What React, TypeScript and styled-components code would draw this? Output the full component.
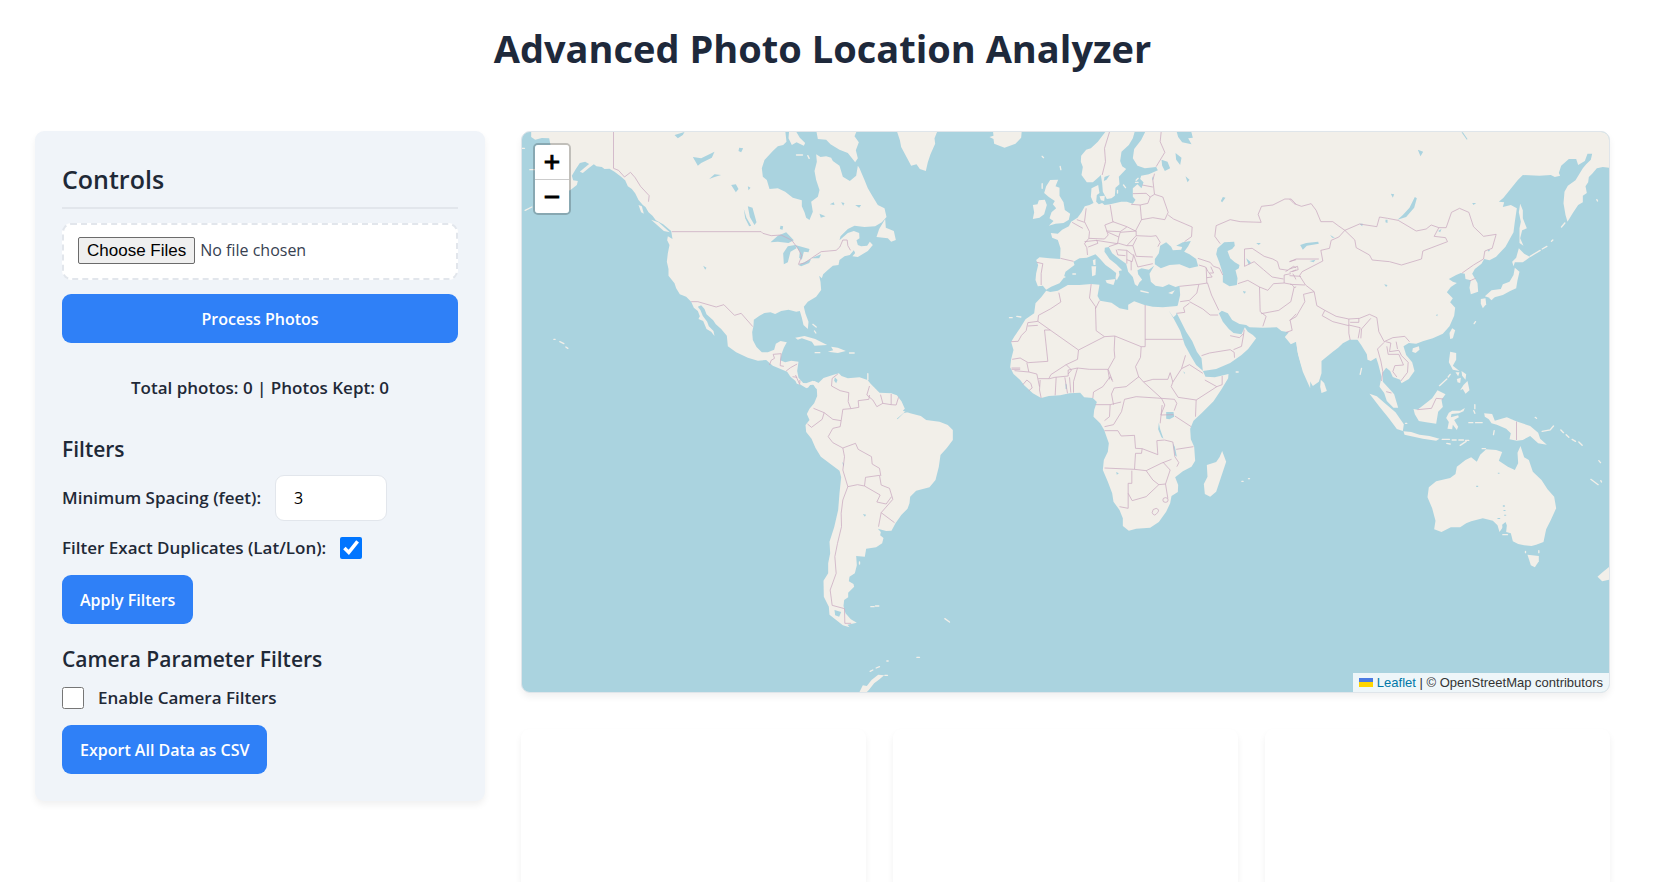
import React from "react";
import styled, { createGlobalStyle } from "styled-components";

const GlobalStyle = createGlobalStyle`
  *, *::before, *::after { box-sizing: border-box; }
  body {
    margin: 0;
    background: #ffffff;
    color: #1f2937;
    font-family: "Open Sans", "Noto Sans", sans-serif;
    font-size: 17px;
    line-height: 24px;
  }
`;

const Page = styled.div`
  min-height: 100vh;
  display: flex;
  flex-direction: column;
  padding: 0 55px 0 35px;
`;

const Title = styled.h1`
  margin: 20px 0 55px;
  text-align: center;
  font-size: 38px;
  line-height: 56px;
  font-weight: 700;
  color: #1e293b;
`;

const Layout = styled.main`
  flex: 1;
  display: grid;
  grid-template-columns: 450px minmax(0, 1fr);
  gap: 36px;
`;

const Panel = styled.aside`
  align-self: start;
  display: flex;
  flex-direction: column;
  align-items: flex-start;
  padding: 27px;
  border-radius: 9px;
  background: #f0f4f9;
  box-shadow: 0 4px 7px rgba(0, 0, 0, 0.06);
`;

const PanelTitle = styled.h2`
  width: 100%;
  margin: 0 0 14px;
  padding: 4px 0 10px;
  border-bottom: 2px solid #e2e6ec;
  font-size: 25px;
  line-height: 35px;
  font-weight: 600;
`;

const SectionTitle = styled.h3`
  margin: 0 0 10px;
  font-size: 21px;
  line-height: 32px;
  font-weight: 600;

  button + & {
    margin-top: 19px;
  }
`;

const FileInput = styled.input`
  width: 100%;
  height: 57px;
  margin-bottom: 14px;
  padding: 12px 14px;
  border: 2px dashed #e2e6ec;
  border-radius: 9px;
  background: #ffffff;
  font: inherit;
  font-size: 16px;
  color: #374151;

  &::file-selector-button {
    height: 27px;
    padding: 0 8px;
    margin-right: 5px;
    border: 1px solid #6b6b6b;
    border-radius: 2px;
    background: #efefef;
    color: #000000;
    font-family: "Liberation Sans", Arial, sans-serif;
    font-size: 17px;
  }
`;

const Button = styled.button<{ $full?: boolean }>`
  width: ${(p) => (p.$full ? "100%" : "auto")};
  height: 49px;
  padding: 0 18px;
  border: 0;
  border-radius: 9px;
  background: #2f80f7;
  color: #ffffff;
  font: inherit;
  font-size: 16px;
  font-weight: 600;
  cursor: pointer;
`;

const Stats = styled.p`
  width: 100%;
  margin: 33px 0;
  text-align: center;
  font-weight: 600;
`;

const Field = styled.div<{ $height: number }>`
  display: flex;
  align-items: center;
  gap: 14px;
  height: ${(p) => p.$height}px;
  margin-bottom: 14px;
  font-weight: 600;
`;

const NumberInput = styled.input`
  width: 112px;
  height: 46px;
  padding: 0 18px;
  border: 1px solid #e2e6ec;
  border-radius: 9px;
  background: #ffffff;
  color: #000000;
  font: inherit;
  font-size: 16px;
  font-weight: 400;
`;

const Checkbox = styled.input`
  width: 22px;
  height: 22px;
  margin: 0;
`;

const Content = styled.section`
  display: flex;
  flex-direction: column;
  gap: 36px;
`;

const MapFrame = styled.div`
  position: relative;
  height: 562px;
  overflow: hidden;
  border: 1px solid #dfe5ea;
  border-radius: 9px;
  background: #aad3df;
  box-shadow: 0 4px 7px rgba(0, 0, 0, 0.06);
`;

const MapDrawing = styled.svg`
  display: block;
  width: 100%;
  height: 100%;
`;

const ZoomControl = styled.div`
  position: absolute;
  top: 11px;
  left: 11px;
  display: flex;
  flex-direction: column;
  border: 2px solid rgba(0, 0, 0, 0.2);
  border-radius: 5px;
  background-clip: padding-box;
  overflow: hidden;
`;

const ZoomButton = styled.button`
  width: 34px;
  height: 34px;
  padding: 0;
  border: 0;
  background: #ffffff;
  color: #000000;
  font: 400 28px/32px "Liberation Sans", Arial, sans-serif;
  -webkit-text-stroke: 1px #000000;

  & + & {
    border-top: 1px solid #cccccc;
  }
`;

const Attribution = styled.div`
  position: absolute;
  right: 0;
  bottom: 0;
  display: flex;
  align-items: center;
  padding: 0 6px;
  background: rgba(255, 255, 255, 0.8);
  color: #333333;
  font: 13px/19px "Liberation Sans", Arial, sans-serif;
  white-space: pre;

  a {
    display: flex;
    align-items: center;
    gap: 4px;
    color: #0078a8;
    text-decoration: none;
  }
`;

const Charts = styled.div`
  flex: 1;
  min-height: 150px;
  display: grid;
  grid-template-columns: repeat(3, minmax(0, 1fr));
  gap: 27px;
`;

const ChartCard = styled.div`
  border-radius: 9px 9px 0 0;
  background: #ffffff;
  box-shadow: 0 4px 7px rgba(0, 0, 0, 0.06);
`;

type Region = {
  x: number;
  y: number;
  land: string[];
  islands?: string;
  lakes?: string;
  borders: string;
};

const regions: Region[] = [
  {
    // North America
    x: 0,
    y: 0,
    land: [
      "M50 15 L50 36 62 44 82 39 104 40 108 60 100 150 150 200 167 196 187 180 190 168 176 166 172 152 184 132 196 114 212 110 224 117 210 128 196 140 205 144 224 128 238 118 246 124 262 126 270 132 285 131 300 140 318 154 332 166 340 184 352 192 362 205 372 225 385 240 393 246 402 262 414 272 424 286 446 298 470 318 474 342 460 334 458 346 465 360 460 385 457 410 462 432 462 452 480 475 485 490 496 508 515 515 530 530 538 548 550 558 556 574 552 582 566 588 576 612 590 620 600 633 597 618 583 604 578 590 565 573 558 556 550 545 560 541 570 552 576 568 596 586 604 598 620 612 637 632 640 664 665 682 700 698 730 707 755 705 775 722 800 733 818 740 828 755 843 768 847 776 860 780 876 790 882 782 895 777 904 790 940 800 940 760 914 775 900 768 884 778 866 774 852 758 848 738 852 710 830 707 812 712 797 706 802 685 808 668 817 652 798 648 784 656 779 674 760 682 742 682 726 666 715 645 713 622 717 602 718 584 735 572 750 564 768 562 782 567 800 558 822 554 845 560 856 558 862 578 867 600 880 612 882 590 873 566 868 545 880 530 905 515 920 495 918 470 914 452 922 460 926 448 940 435 955 422 972 420 975 405 990 394 1006 390 1018 376 1022 384 1014 394 1030 396 1060 378 1075 360 1066 350 1058 362 1040 364 1030 360 1026 346 1035 340 1034 324 1018 318 1000 324 975 346 978 334 1000 312 1020 302 1050 306 1082 304 1102 292 1116 276 1110 250 1090 240 1074 214 1060 190 1050 165 1035 130 1030 122 1025 152 1006 168 985 155 975 122 955 108 950 98 935 94 918 96 905 88 907 110 900 138 905 165 915 195 910 215 890 230 895 260 885 285 875 278 870 262 862 244 862 226 835 218 812 200 790 190 765 192 757 165 745 155 742 130 750 105 775 78 790 64 806 60 816 50 812 15Z",
      "M824 15 L822 40 832 60 846 52 868 62 872 54 856 38 842 15Z",
      "M905 15 L910 42 935 44 948 58 975 74 1000 84 1022 112 1030 100 1024 76 1033 52 1020 34 1028 15Z",
      "M1146 15 L1156 45 1160 66 1174 92 1190 122 1206 118 1216 132 1234 138 1240 112 1248 88 1262 56 1260 40 1270 15Z",
      "M1112 282 L1114 308 1138 318 1144 345 1130 350 1120 340 1086 336 1094 312Z",
      "M842 638 L870 633 902 642 938 660 900 662 892 650 862 640 850 644Z",
      "M950 665 L970 668 994 678 970 684 940 680 956 676Z",
      "M410 284 L432 292 466 322 448 318Z",
      "M372 240 L382 244 388 266 380 262Z",
    ],
    islands:
      "M902 683h14 M1005 684h14 M22 70h8 M46 134h14 M32 256l20-10 M154 666l6 4 M118 643h4 M136 650l12 6 M895 598l10 8 M900 618l4 6 M1060 746v18 M846 90h18 M880 92l4 8",
    lakes:
      "M768 352 L790 332 815 322 838 346 822 354 790 350Z M808 418 L806 385 820 364 842 360 846 370 828 380 820 412Z M842 360 L885 372 882 382 868 380 862 404 854 398 856 380Z M852 420 L890 402 884 414 860 424Z M890 400 L920 388 914 400Z M700 244 L714 248 726 292 720 300 706 276Z M688 252 l8 26 14 24 -6 2 -12 -24Z M535 96 L560 100 600 80 592 98 560 114 550 122Z M480 30 L510 21 505 30 490 40Z M584 162 L600 148 620 150 600 156Z M674 68 l12 2 -6 12 -8 -4Z M650 180 l14 -2 8 14 -8 10Z M700 184 l8 4 -6 8Z M915 266 l18 8 -14 4Z M946 238 l12 -6 2 8Z M980 232 l10 2 -4 8Z M1022 240 l18 0 -6 8Z M798 302 l8 2 -2 10 -8 -2Z M566 422 l10 6 -4 6Z M962 756 l8 8 -6 10Z",
    borders:
      "M297 21 V130 L312 136 330 156 348 142 362 158 378 184 404 212 402 230 M472 320 H740 L745 325 770 332 800 330 832 346 850 370 862 392 852 418 870 414 896 396 920 380 965 376 976 366 985 345 998 345 1000 362 1008 376 M530 530 L550 530 605 546 628 539 660 571 680 565 715 605 M765 720 L770 706 780 700 776 688 800 686 797 722 808 724 M815 738 L828 728 848 717 M834 755 L848 757 M856 765 v15",
  },
  {
    // South America and the Antarctic Peninsula
    x: 795,
    y: 705,
    land: [
      "M60 70 L85 84 92 74 103 74 112 88 113 108 104 130 90 146 82 162 90 180 78 195 80 216 96 236 108 264 124 290 150 310 180 332 185 352 180 400 176 450 164 502 150 545 152 580 146 610 146 640 132 662 133 710 148 740 150 764 170 780 190 796 210 802 204 794 232 788 214 778 198 760 192 738 194 720 206 712 206 698 224 680 222 672 208 664 210 650 226 640 232 616 230 588 256 590 260 566 290 562 308 550 312 534 302 526 304 516 295 506 320 513 336 512 348 490 366 464 384 446 390 430 392 410 410 392 450 382 468 360 478 320 483 285 502 264 520 240 520 210 505 195 480 185 440 180 424 168 392 160 370 152 376 146 366 124 352 106 335 100 300 98 286 84 274 72 264 60 240 52 205 55 186 48 178 40 160 45 132 54 116 70 100 62 80 70Z",
      "M240 996 L250 976 262 978 276 960 296 944 314 946 300 958 284 970 268 990 262 996Z",
    ],
    islands:
      "M274 740h10 M288 738h10 M496 776l14 10 M272 934l8-4 M290 924l10-4 M322 903h4 M316 946h8 M240 606v6 M412 892h8",
    lakes:
      "M166 52 l8 8 -4 10 -6 -8Z M188 306 l6 6 -2 8Z M250 462 l10 2 -4 6Z M165 750 l20 6 -6 14 -12 -4Z M352 176 L380 152 386 156 372 160 354 178Z",
    borders:
      "M175 42 L158 55 156 78 182 92 208 98 206 125 214 146 238 142 236 122 268 118 270 105 M102 145 L134 158 160 178 185 182 190 148 214 146 M134 158 L128 178 96 202 84 192 M185 182 L182 200 160 205 146 230 160 248 190 264 228 250 236 268 276 290 278 312 300 325 304 348 M190 264 L195 290 190 330 205 380 234 374 255 378 M255 378 L258 352 300 346 305 375 330 385 340 418 305 458 297 500 M336 410 L320 432 292 426 302 405 255 378 M305 458 L345 488 M205 380 L190 420 185 460 186 500 174 550 166 590 170 640 152 690 158 736 195 746 196 790 215 790 M270 78 L262 105 280 120 292 140 310 130 303 104 M310 130 L335 134 335 102 M335 134 L350 135 357 112 M48 45 L60 72",
  },
  {
    // Europe, the Middle East and western Asia
    x: 1425,
    y: 0,
    land: [
      "M10 15 L12 32 0 36 12 42 14 56 45 68 78 56 95 38 97 15Z",
      "M352 15 L325 50 304 70 290 74 275 92 274 110 280 126 276 150 292 172 310 172 328 156 334 150 338 175 340 200 352 222 366 220 376 212 378 188 390 178 388 155 410 132 398 124 392 108 396 80 418 60 430 40 437 15Z",
      "M470 15 L455 45 434 72 430 100 444 122 466 130 500 126 505 136 478 148 455 152 452 162 462 172 456 190 444 178 430 190 430 215 438 224 430 236 412 230 395 230 362 238 345 240 338 234 328 238 320 230 322 210 330 204 326 180 306 190 304 215 312 234 300 240 286 244 276 262 264 278 245 290 238 304 218 314 205 326 184 324 188 338 205 345 213 370 212 402 180 400 150 397 140 405 146 420 140 445 138 465 145 484 160 482 170 494 185 485 210 475 222 460 228 440 255 420 252 410 270 400 292 398 318 388 332 402 348 420 365 432 380 444 378 460 382 466 390 450 388 438 398 436 380 418 360 402 345 380 346 368 358 366 368 385 390 402 410 416 416 440 430 456 436 478 444 484 450 472 458 464 446 448 444 436 456 430 478 434 494 422 480 446 484 470 498 482 520 486 538 478 558 486 570 482 572 510 565 540 555 556 562 565 575 590 590 620 608 648 622 680 636 700 640 738 680 732 722 714 756 690 776 672 800 640 790 630 775 620 766 607 756 628 732 624 718 612 700 590 688 565 697 557 715 565 728 585 750 597 770 600 780 607 820 608 862 607 876 618 898 622 886 636 904 658 920 650 926 690 940 740 962 790 L970 15Z",
      "M182 165 L206 164 198 184 210 188 210 212 222 232 226 255 242 266 238 284 222 294 198 296 178 302 192 288 180 280 186 262 200 250 190 238 196 228 178 216 164 204 170 184Z",
      "M148 226 L166 224 172 240 164 268 150 278 130 282 134 262 130 240 144 238Z",
      "M306 424 L320 424 318 450 308 454Z",
      "M310 406 L318 402 318 420 312 420Z",
      "M348 466 L378 462 372 480 352 474Z",
      "M536 504 L556 496 548 508Z",
      "M330 214 L346 212 344 228 334 226Z",
    ],
    islands:
      "M454 498 L476 503 M402 180l6 8 M384 196v8 M440 166l6-6 M438 172h8 M212 124l2 10 M158 94l4 4 M158 176v14 M250 447h8 M222 456h4 M60 578h8 M82 574l12 2 M740 741h6",
    lakes:
      "M512 362 L530 352 545 365 550 376 575 374 578 366 560 362 580 352 604 348 596 364 584 380 600 388 620 402 626 424 600 430 570 418 540 420 514 430 496 418 496 402 508 385Z M704 352 L734 350 736 362 728 372 714 378 722 400 736 412 750 420 748 430 738 436 744 460 742 480 720 484 700 472 700 446 690 414 680 388 684 370Z M560 15 L604 15 610 38 596 40 606 58 578 52 566 36Z M516 104 L534 110 542 130 526 138 518 122Z M558 84 L576 98 572 120 560 104Z M588 154l12 10-6 8z M700 216 l8 2 -10 14 -4 -4Z M935 362 L960 352 960 358 942 370Z M770 400l14 12-6 8z M345 156l16-6-10 14-8 4z M760 498l10 2-6 6z M800 354h14l-6 6z M488 154l4 8-4 4z",
    borders:
      "M360 21 L345 70 348 110 338 150 M515 21 L512 50 526 82 500 125 M495 146 L490 165 495 208 520 216 536 262 526 284 490 278 456 284 452 240 475 235 482 216 495 208 M458 180 L490 186 M430 206 L470 205 482 216 M425 238 L452 240 M362 240 L370 290 412 305 438 318 456 284 M536 270 L552 282 608 306 606 335 585 350 M440 332 L485 334 500 332 512 352 505 365 M290 250 L285 290 300 320 298 340 345 342 356 330 346 300 372 290 M248 292 L280 310 M262 284 L285 292 M298 340 L285 356 292 368 294 390 M285 350 L322 346 325 355 296 366 M320 346 L384 356 388 336 356 322 M350 318 L392 320 412 306 M388 336 L392 322 440 318 440 332 412 362 384 354 M412 362 L430 362 442 338 M430 362 L440 394 490 396 M432 388 L445 426 490 416 M358 365 L384 356 M380 374 L385 390 408 392 M384 374 L412 376 412 416 M412 376 L432 392 428 410 412 404 M425 408 L425 436 M142 412 L160 416 155 445 155 480 M213 400 L252 409 M625 400 L662 412 672 424 690 430 700 450 M628 420 L648 426 656 440 668 456 652 458 M664 425 L672 444 660 444 M650 428 L652 474 M570 484 L628 478 654 474 666 510 688 556 M628 478 L622 504 600 526 572 530 M600 530 L640 552 662 570 686 570 M600 534 L582 548 586 562 562 565 M636 692 L660 684 722 674 734 682 735 698 M732 674 L756 664 762 630 764 614 M722 632 L750 638 762 626 M692 356 L676 334 680 302 722 284 752 290 815 292 806 268 816 244 850 240 886 222 905 222 920 238 960 236 M765 424 V372 L788 370 824 394 850 402 864 410 870 432 896 436 M765 424 L794 410 822 434 848 456 882 462 M745 476 L775 466 810 486 812 560 830 574 820 604 M810 486 L835 496 852 476 884 474 906 478 914 486 904 530 868 556 815 566 M884 474 L884 450 904 446 M888 440 L912 424 926 432 900 442 M900 410 L920 404 960 402 M910 446 L920 464 952 484 M914 488 L944 476 M960 508 L944 512 940 545 902 586 908 616 890 622",
  },
  {
    // Africa
    x: 1425,
    y: 435,
    land: [
      "M170 62 L155 82 138 100 134 130 108 148 92 174 74 200 65 216 72 240 65 268 62 292 72 312 92 330 104 346 130 370 155 384 178 378 212 376 240 370 272 368 284 382 310 384 322 396 314 420 312 440 332 460 344 480 358 520 355 545 343 570 340 600 355 635 368 670 372 695 390 720 400 745 400 768 418 782 440 776 482 773 508 756 530 725 542 700 546 678 565 666 566 645 557 622 580 604 606 590 617 572 614 530 604 508 602 476 612 452 636 430 672 394 696 358 716 325 717 312 676 322 648 320 640 302 620 285 604 258 586 225 572 182 552 145 538 122 552 142 560 134 563 108 520 112 490 110 465 105 434 94 416 104 416 120 390 115 366 98 332 92 324 78 330 44 305 42 270 45 235 45 205 62 182 66Z",
      "M698 543 L710 575 695 620 680 665 662 680 646 672 643 642 654 620 652 585 680 576 690 562Z",
    ],
    islands: "M757 634h4 M777 626h3",
    lakes:
      "M530 426 L552 426 554 440 540 448 530 446Z M508 458 L512 478 522 506 516 502 506 478Z M550 520 L556 530 562 560 556 556Z M380 606l8 4-6 4z M228 340l4 4v14l-4-2z M582 304l4 4-2 4z",
    borders:
      "M208 68 L214 96 184 116 147 136 145 154 267 240 345 200 376 198 374 240 376 262 356 298 368 330 M145 154 L115 158 110 182 96 196 86 214 65 215 M145 166 L115 168 M165 180 L182 180 M165 180 L175 274 116 278 M116 278 L92 264 68 268 M112 278 L118 306 75 302 M66 294 h26 M66 298 h26 M305 42 L300 84 318 110 320 182 345 200 M330 92 L318 116 M267 240 L264 268 230 284 184 314 178 326 M376 198 L455 230 467 230 V105 M467 208 H580 M455 230 L453 262 438 290 448 322 M252 368 V335 L264 294 300 298 355 298 360 328 M230 284 L246 300 236 312 M264 294 L236 300 236 318 196 322 180 326 146 326 M197 376 L200 322 M234 370 L226 322 M244 368 L240 322 M155 384 L150 360 152 330 M118 306 L142 312 150 350 M100 344 L112 330 124 340 128 354 118 362 M310 384 L312 366 340 350 362 320 370 335 M372 404 L366 372 374 354 410 350 448 320 462 336 516 385 440 380 405 388 M462 336 L490 328 535 328 542 308 550 336 545 350 566 382 620 390 682 350 646 330 M550 336 L576 296 600 284 640 310 M576 296 L588 256 M682 350 L698 344 698 318 M620 390 L618 440 M516 385 L555 388 562 400 554 422 M516 385 L526 405 514 435 552 434 M556 438 L605 470 M405 388 L396 425 372 464 345 470 M345 482 L385 482 395 498 435 496 438 535 458 536 456 550 438 550 435 598 345 594 M435 598 L470 602 515 580 546 568 M458 536 L505 554 502 512 525 510 550 516 M560 538 L612 530 M550 516 L556 560 568 578 562 590 M427 602 V640 H416 V715 L390 710 M416 670 L428 692 470 680 508 644 528 642 542 600 520 576 M470 602 L490 630 508 644 M528 642 L535 685 M518 405 L512 460 M318 404 H362 L360 440 345 452 M362 404 L395 396 M520 690 q0-7 8-7 t8 7 t-8 7 t-8-7 M488 728 q0-12 12-13 q12 4 4 13 q-10 14-16 0",
  },
  {
    // Eastern Asia
    x: 2325,
    y: 0,
    land: [
      "M20 15 H970 V130 L940 126 922 130 908 146 898 156 896 172 888 184 892 204 880 212 880 232 866 240 850 264 834 290 828 270 822 235 825 200 835 182 858 166 880 130 890 118 904 104 908 86 894 86 886 108 866 120 860 102 838 102 815 122 808 144 812 152 796 156 784 150 750 152 700 150 685 165 665 190 642 218 628 230 644 232 640 246 664 240 682 250 676 290 672 322 648 365 620 395 600 406 584 402 576 416 556 432 548 446 564 474 566 500 544 508 540 488 544 466 528 462 526 446 514 444 500 450 478 462 490 470 502 474 484 486 472 502 490 520 482 532 497 548 494 572 480 604 460 626 430 640 402 648 380 656 358 654 342 664 350 690 368 712 375 738 358 762 336 775 332 764 310 756 302 738 290 728 280 742 280 770 300 792 314 808 326 848 312 848 292 828 284 804 270 785 276 755 266 716 260 698 244 708 234 704 232 688 215 660 204 644 180 644 160 655 146 668 130 680 96 708 96 745 88 770 70 783 50 750 36 722 24 680 20 650Z",
      "M488 610 L497 616 490 640 482 642 480 624Z",
      "M370 670 L388 664 390 674 378 684 368 680Z",
      "M94 764 L104 774 112 798 96 804 92 785Z",
      "M240 806 L262 814 288 836 318 862 343 898 340 918 322 912 298 880 270 845Z",
      "M372 852 L384 854 410 834 428 820 444 796 468 808 456 824 460 846 446 860 440 896 410 892 388 888 376 868Z",
      "M482 680 L500 684 500 704 490 722 510 738 490 734 478 712Z",
      "M512 796 L522 780 534 768 540 796 528 806 520 792Z",
      "M498 742 L510 742 506 754Z",
      "M516 738 L530 748 528 764 518 752Z",
      "M502 762 L514 758 512 774 504 772Z",
      "M676 428 L690 440 684 466 680 490 662 498 640 510 604 520 586 514 606 496 634 492 640 478 660 470 672 450Z",
      "M574 522 L588 520 590 538 580 550 574 536Z",
      "M598 518 L618 514 606 526Z",
      "M688 370 L704 386 722 396 700 412 676 412 672 424 668 410 680 398Z",
      "M692 236 L700 256 700 280 712 310 698 316 692 340 702 362 690 354 690 310 694 290 688 262Z",
    ],
    islands:
      "M450 782 L472 762 M476 756l6-8 M722 394l30-18 M758 372l14-8 M786 349l4-4 M816 306l10-12 M554 596l4-6 M216 730l-4 18 M922 224l2 4",
    lakes:
      "M376 216 L382 220 374 248 350 276 324 284 340 270 360 248Z M32 360 L50 354 86 350 88 356 52 362 40 374Z M284 478l10 2-4 6z M210 296h10l-2 8z M288 284h6v10l-6-2z M594 374h8l-4 6z M60 408l18-4-6 8z M122 330l14 8-8 0z M304 206l10 2-4 10z M385 74l16 6-8 14z M548 234l12 0-8 6z M446 318l10-6-4 10z M445 568l-6 2 4 4z M516 22 L520 22 534 42 532 44Z",
    borders:
      "M0 222 L14 236 36 244 65 236 80 256 94 290 130 290 146 302 166 316 210 297 262 305 270 276 294 280 326 286 380 318 410 312 425 300 448 308 470 308 486 262 510 250 538 262 552 305 582 334 620 328 608 370 586 378 582 402 M166 316 L196 345 200 368 240 390 248 405 300 410 336 420 396 402 400 378 474 350 468 338 434 334 448 308 M582 402 L552 420 518 444 M540 468 L558 460 M166 316 L148 336 125 346 120 370 94 376 100 408 38 440 30 452 48 480 74 500 82 542 106 556 140 574 178 582 210 580 240 568 262 578 268 620 284 650 310 638 346 634 360 650 M106 556 L98 572 130 590 178 602 178 582 M178 602 L178 625 182 645 M178 600 L212 608 206 640 M182 592 L208 592 208 580 M244 580 L216 612 214 640 M284 652 L264 672 274 708 280 740 276 768 M288 650 L304 654 300 680 328 676 336 692 356 712 354 742 334 768 M292 664 L296 688 328 688 342 720 316 722 310 740 322 756 M324 672 L320 650 M290 800 L306 804 M384 854 L426 850 440 820 462 822 M0 410 L20 402 88 402 M0 432 L24 424 26 434 8 440 M0 452 L34 454 M2 478 L46 480 M74 500 L42 508 46 530 20 575 0 586",
  },
  {
    // Indonesia and Oceania
    x: 2325,
    y: 825,
    land: [
      "M342 94 L365 96 390 104 420 108 450 116 440 122 400 116 345 104Z",
      "M488 32 L512 32 526 24 522 34 508 40 486 42 484 52 506 46 508 52 494 60 506 80 502 90 490 74 488 88 474 86 478 66 470 54 478 38Z",
      "M584 40 L608 42 616 62 636 56 652 52 680 64 722 78 746 98 752 116 772 134 746 130 722 108 700 120 682 122 660 118 664 100 650 86 622 74 606 70 598 58 586 50Z",
      "M418 262 L440 244 482 234 498 222 502 200 528 180 545 172 562 185 572 164 590 148 620 150 638 156 628 182 655 200 676 210 686 190 684 158 693 138 704 172 718 180 730 215 756 240 774 268 794 290 800 325 784 360 770 388 762 426 740 434 726 438 704 436 686 432 670 424 664 400 650 396 652 376 640 382 630 396 624 376 610 362 580 355 545 364 530 370 512 382 484 382 456 396 434 388 438 362 428 325 414 292Z",
      "M714 464 L748 468 748 484 736 502 724 496Z",
      "M970 492 L940 516 924 530 938 544 970 536Z",
    ],
    islands:
      "M556 14v12 M553 32l3 8 M538 68h12 M558 68h20 M458 118h22 M488 120h12 M508 120h14 M528 121h10 M512 136 L530 124 M472 130l10 2 M614 92l-2 12 M758 94 L782 90 792 78 M814 90l8 8 M830 104l8 8 M848 118l10 6 M868 126l10 10 M904 238 L926 254 M928 182l5 6 M934 242l2 4 M640 404h14 M708 454v4 M748 452v6 M578 146h10 M737 52l4 3 M348 70h4",
    lakes:
      "M638 374 L648 366 652 376 640 394Z M640 316h6v4h-6z M642 330h6v3h-6z M644 344h6v3h-6z M624 354h8v3h-8z M560 257h6v4h-6z M625 218h5v3h-5z",
    borders: "M681 65 V120",
  },
];

const RegionShape = ({ region }: { region: Region }) => (
  <g transform={`translate(${region.x} ${region.y})`}>
    {region.land.map((d) => (
      <path key={d} d={d} fill="#f2efe9" />
    ))}
    {region.islands && (
      <path d={region.islands} fill="none" stroke="#f2efe9" strokeWidth="4" strokeLinecap="round" />
    )}
    {region.lakes && <path d={region.lakes} fill="#aad3df" />}
    <path
      d={region.borders}
      fill="none"
      stroke="#c9a9c0"
      strokeWidth="3"
      strokeLinejoin="round"
      opacity="0.75"
    />
  </g>
);

const WorldMap = () => (
  <MapDrawing viewBox="21 21 3264 1680" preserveAspectRatio="xMidYMid slice" role="img" aria-label="World map">
    {regions.map((region) => (
      <RegionShape key={`${region.x}-${region.y}`} region={region} />
    ))}
  </MapDrawing>
);

const Flag = () => (
  <svg width="14" height="9" viewBox="0 0 14 9" aria-hidden="true">
    <path fill="#4c7be1" d="M0 0h14v5H0z" />
    <path fill="#ffd500" d="M0 4h14v5H0z" />
  </svg>
);

export default function App() {
  return (
    <>
      <GlobalStyle />
      <Page>
        <Title>Advanced Photo Location Analyzer</Title>
        <Layout>
          <Panel>
            <PanelTitle>Controls</PanelTitle>
            <FileInput type="file" multiple aria-label="Photos" />
            <Button $full type="button">Process Photos</Button>
            <Stats>Total photos: 0 | Photos Kept: 0</Stats>
            <SectionTitle>Filters</SectionTitle>
            <Field $height={46}>
              <label htmlFor="spacing">Minimum Spacing (feet):</label>
              <NumberInput id="spacing" type="number" defaultValue={3} />
            </Field>
            <Field $height={26}>
              <label htmlFor="duplicates">Filter Exact Duplicates (Lat/Lon):</label>
              <Checkbox id="duplicates" type="checkbox" defaultChecked />
            </Field>
            <Button type="button">Apply Filters</Button>
            <SectionTitle>Camera Parameter Filters</SectionTitle>
            <Field $height={26}>
              <Checkbox id="camera" type="checkbox" />
              <label htmlFor="camera">Enable Camera Filters</label>
            </Field>
            <Button type="button">Export All Data as CSV</Button>
          </Panel>
          <Content>
            <MapFrame>
              <WorldMap />
              <ZoomControl>
                <ZoomButton type="button" aria-label="Zoom in">+</ZoomButton>
                <ZoomButton type="button" aria-label="Zoom out">−</ZoomButton>
              </ZoomControl>
              <Attribution>
                <a href="#leaflet"><Flag />Leaflet</a>
                <span> | © OpenStreetMap contributors</span>
              </Attribution>
            </MapFrame>
            <Charts>
              <ChartCard />
              <ChartCard />
              <ChartCard />
            </Charts>
          </Content>
        </Layout>
      </Page>
    </>
  );
}
